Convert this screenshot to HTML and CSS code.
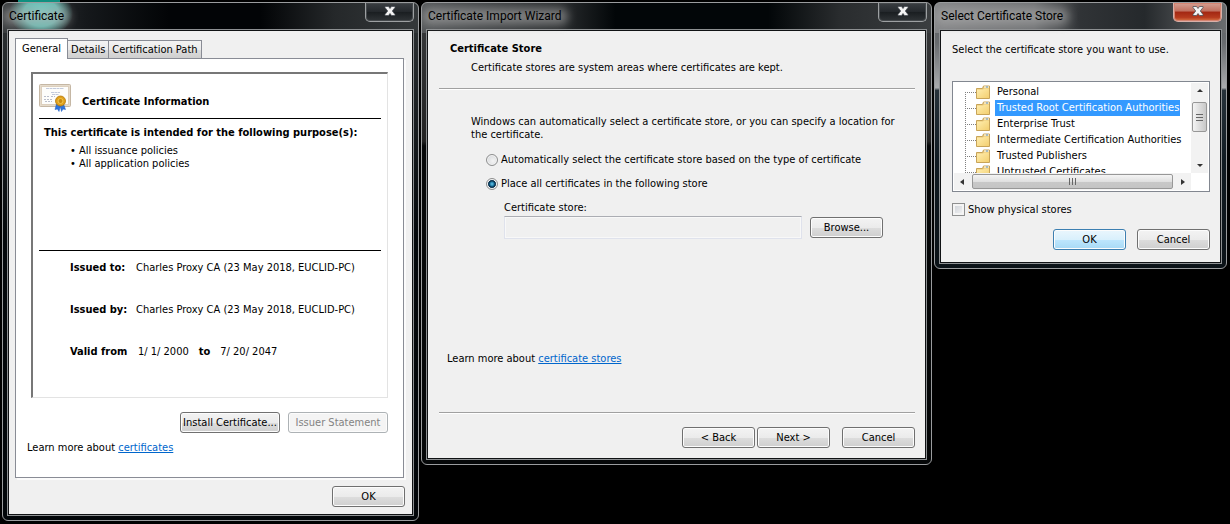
FILE: index.html
```html
<!DOCTYPE html>
<html lang="en">
<head>
<meta charset="utf-8">
<title>Certificate Import</title>
<link rel="stylesheet" href="styles.css">
</head>
<body>
<svg width="0" height="0" class="defs" aria-hidden="true">
  <defs>
    <linearGradient id="fold" x1="0" y1="0" x2="1" y2="1"><stop offset="0" stop-color="#ffeeb0"/><stop offset="1" stop-color="#f3cf70"/></linearGradient>
    <symbol id="close" viewBox="0 0 12 10">
      <path d="M1 .5h3.500L6 2.500 7.500.5H11v1L8.300 5 11 8.500v1H7.500L6 7.500 4.500 9.500H1v-1L3.700 5 1 1.500z" fill="#f4f4f4" stroke="#4b5058" stroke-width=".8"/>
    </symbol>
    <symbol id="folder" viewBox="0 0 15 14">
      <path d="M.5 3.500h6l1-2.500h6v12.500H.5z" fill="#e9c878" stroke="#c8a458"/>
      <path d="M8 2h5" stroke="#fff"/><path d="M10 2h2" stroke="#5b95c8"/>
      <path d="M1 4.500h6l1.500-1H13V13H1z" fill="url(#fold)"/>
    </symbol>
  </defs>
</svg>
<main class="desktop">

  <section class="window window-cert">
    <header class="titlebar"><h1 class="title">Certificate</h1><button class="close" aria-label="Close"><svg width="12" height="10"><use href="#close"/></svg></button></header>
    <div class="client client-cert">
      <div class="tabs" role="tablist">
        <button class="tab tab-active" role="tab" aria-selected="true">General</button>
        <button class="tab" role="tab">Details</button>
        <button class="tab" role="tab">Certification Path</button>
      </div>
      <div class="panel">
        <div class="sheet">
          <div class="sheet-head">
            <svg width="32" height="28" viewBox="0 0 32 28" aria-hidden="true">
              <rect x=".5" y=".5" width="31" height="22" rx="1" fill="#dccfbd" stroke="#c5b7a4"/>
              <rect x="1.500" y="1.500" width="29" height="20" fill="none" stroke="#efe6da" stroke-dasharray="1 1"/>
              <rect x="3" y="3" width="26" height="17" fill="#fdfdfb"/>
              <path d="M7 4.500h18M12 8.500h9M13 10.500h7" stroke="#c3cadb" stroke-dasharray="3 .5"/>
              <path d="M5 12.500h5M12 12.500h4M5 15.500h8M6 17.500h7" stroke="#b9bdca" stroke-dasharray="2 1"/>
              <path d="M17.500 20l-1.500 5.500 2.500-.5 1.500 2.500 1.500-6zM24.500 20l2 5.500-2.500-.5-1.500 2.500-1.500-6z" fill="#2e73dd" stroke="#1b58bd" stroke-width=".5"/>
              <circle cx="21.500" cy="17" r="5" fill="#e0a01c" stroke="#b57908" stroke-width=".8"/>
              <circle cx="21.500" cy="17" r="2.500" fill="#c98b10" stroke="#f3c64c"/>
            </svg>
            <h2 class="sheet-title">Certificate Information</h2>
          </div>
          <div class="purposes">
            <h3 class="bold">This certificate is intended for the following purpose(s):</h3>
            <ul class="bullets"><li>• All issuance policies</li><li>• All application policies</li></ul>
          </div>
          <dl class="facts">
            <div class="fact"><dt>Issued to:</dt><dd>Charles Proxy CA (23 May 2018, EUCLID-PC)</dd></div>
            <div class="fact"><dt>Issued by:</dt><dd>Charles Proxy CA (23 May 2018, EUCLID-PC)</dd></div>
            <div class="fact fact-valid"><dt>Valid from</dt><dd>1/ 1/ 2000</dd><dt>to</dt><dd>7/ 20/ 2047</dd></div>
          </dl>
        </div>
        <div class="sheet-actions">
          <button class="btn btn-wide">Install Certificate...</button>
          <button class="btn btn-wide" disabled>Issuer Statement</button>
        </div>
        <p class="learn">Learn more about <a href="#certificates">certificates</a></p>
      </div>
      <div class="cert-footer"><button class="btn">OK</button></div>
    </div>
  </section>

  <section class="window window-wizard">
    <header class="titlebar"><h1 class="title">Certificate Import Wizard</h1><button class="close" aria-label="Close"><svg width="12" height="10"><use href="#close"/></svg></button></header>
    <div class="client client-wizard">
      <div class="wizard-head">
        <h2 class="bold">Certificate Store</h2>
        <p class="subtitle">Certificate stores are system areas where certificates are kept.</p>
      </div>
      <div class="wizard-body">
        <p>Windows can automatically select a certificate store, or you can specify a location for the certificate.</p>
        <div class="options">
          <label class="option"><input type="radio" class="radio" name="store">Automatically select the certificate store based on the type of certificate</label>
          <label class="option"><input type="radio" class="radio" name="store" checked>Place all certificates in the following store</label>
        </div>
        <div class="store">
          <label for="store-name">Certificate store:</label>
          <div class="store-row"><input class="field" id="store-name" type="text" readonly><button class="btn">Browse...</button></div>
        </div>
      </div>
      <p class="wizard-learn">Learn more about <a href="#stores">certificate stores</a></p>
      <div class="wizard-footer"><button class="btn">&lt; Back</button><button class="btn">Next &gt;</button><button class="btn btn-apart">Cancel</button></div>
    </div>
  </section>

  <section class="window window-select">
    <header class="titlebar"><h1 class="title">Select Certificate Store</h1><button class="close close-red" aria-label="Close"><svg width="12" height="10"><use href="#close"/></svg></button></header>
    <div class="client client-select">
      <p>Select the certificate store you want to use.</p>
      <div class="tree">
        <ul class="nodes">
          <li class="node"><svg width="15" height="14"><use href="#folder"/></svg><span class="name">Personal</span></li>
          <li class="node"><svg width="15" height="14"><use href="#folder"/></svg><span class="name name-selected">Trusted Root Certification Authorities</span></li>
          <li class="node"><svg width="15" height="14"><use href="#folder"/></svg><span class="name">Enterprise Trust</span></li>
          <li class="node"><svg width="15" height="14"><use href="#folder"/></svg><span class="name">Intermediate Certification Authorities</span></li>
          <li class="node"><svg width="15" height="14"><use href="#folder"/></svg><span class="name">Trusted Publishers</span></li>
          <li class="node"><svg width="15" height="14"><use href="#folder"/></svg><span class="name">Untrusted Certificates</span></li>
        </ul>
        <div class="vbar"><i class="arrow arrow-up"></i><i class="thumb thumb-v"></i><i class="arrow arrow-down"></i></div>
        <div class="hbar"><i class="arrow arrow-left"></i><i class="thumb thumb-h"></i><i class="arrow arrow-right"></i></div>
      </div>
      <label class="check-row"><input type="checkbox" class="check">Show physical stores</label>
      <div class="select-footer"><button class="btn btn-default">OK</button><button class="btn">Cancel</button></div>
    </div>
  </section>
</main>
</body>
</html>
```
FILE: styles.css
```css
* { box-sizing: border-box; }
html, body { margin: 0; min-height: 100%; background: #000; }
body { font: 11px/13px "DejaVu Sans Condensed", "Noto Sans", sans-serif; color: #000; }
h1, h2, h3, p, ul, dl, dd { margin: 0; padding: 0; }
ul { list-style: none; }
svg { display: block; flex: none; }
button, input { font: inherit; color: inherit; margin: 0; }
a { color: #0066cc; }
.defs { position: absolute; }
.bold { font-size: 11px; line-height: 13px; font-weight: bold; }

.desktop {
  display: grid;
  grid-template-columns: 417fr 511fr 293fr;
  gap: 2px;
  align-items: start;
  padding: 2px 3px 2px 2px;
  background: linear-gradient(#109080, #109080) 18px 0 / 42px 2px no-repeat;
}

/* Window frame */
.window { min-width: 0; padding: 0 4px 4px; border: 1px solid #9a9c9e; border-radius: 6px; overflow: hidden; }
.window-cert { background: radial-gradient(ellipse 32px 24px at 38px 10px, #6fd6cb 0, #6bbdb4 55%, transparent) 0 0 / 100% 30px no-repeat, linear-gradient(90deg, #3b3e40 0, #15181b 20%, #020406 40%, #020406 62%, #25282a 80%, #34383a 100%) 0 0 / 100% 30px no-repeat, linear-gradient(#303436, #04080b 45%, #020609); }
.window-wizard { background: linear-gradient(90deg, #55585a 0, #26292b 28%, #020608 38%, #020608 68%, #292c2e 82%, #3b3e40 100%) 0 0 / 100% 30px no-repeat, linear-gradient(#3a3c3e, #222 30%, #050708 31%); }
.window-select { background: linear-gradient(90deg, #858688 0, #707274 34%, #303336 50%, #25292c 72%, #6b6d6f 100%) 0 0 / 100% 30px no-repeat, linear-gradient(#5b5e61 0, #686b6e 15%, #a9abad 32%, #27323a 33%, #101a21 60%, #0b1217); }
.titlebar { display: flex; justify-content: space-between; align-items: flex-start; height: 26px; padding: 0 0 0 2px; }
.title { position: relative; z-index: 0; font: 12px/26px Roboto, "Noto Sans", sans-serif; white-space: nowrap; }
.title::before { content: ""; position: absolute; z-index: -1; inset: 5px -6px 4px; border-radius: 8px; background: #aaa; opacity: .6; filter: blur(5px); }
.close { display: grid; place-items: center; width: 49px; height: 19px; padding: 0 0 2px; border: 1px solid #9da0a2; border-top: 0; border-radius: 0 0 5px 5px; background: linear-gradient(#3a3e42, #24282c 50%, #1a1e21 51%, #303437); box-shadow: inset 0 0 0 1px #45494c; }
.close-red { border-color: #d9b0a8; background: linear-gradient(#d5a093, #c0705f 45%, #a32712 50%, #b63b1e 80%, #d77545); box-shadow: inset 0 0 0 1px #d58471; }
.client { background: #f0f0f0; border: 1px solid #101214; outline: 1px solid #8d9092; margin: 1px; }

/* Buttons */
.btn { flex: none; width: 73px; height: 21px; padding: 0; text-align: center; white-space: nowrap; border: 1px solid #707070; border-radius: 3px; background: linear-gradient(#f3f3f3, #ebebeb 50%, #dddddd 51%, #cfcfcf); box-shadow: inset 0 0 0 1px #fcfcfc; }
.btn-wide { width: 100px; }
.btn:disabled { color: #838383; border-color: #adb2b5; background: #f4f4f4; }
.btn-default { border-color: #3c7fb1; background: linear-gradient(#eaf6fd, #d9f0fc 50%, #bee6fd 51%, #a7d9f5); }

/* Certificate */
.client-cert { padding: 7px 7px 7px 6px; }
.tabs { display: flex; align-items: flex-end; position: relative; }
.tab { height: 18px; padding: 0 3px; white-space: nowrap; border: 1px solid #898c95; border-bottom: 0; background: linear-gradient(#f3f3f3, #ebebeb 50%, #dddddd 51%, #cfcfcf); margin-left: -1px; }
.tab-active { height: 21px; padding: 0 6px 1px; margin: 0 0 -1px; background: #fff; z-index: 1; }
.panel { margin-right: 1px; padding: 13px 15px 23px 11px; border: 1px solid #898c95; background: #fff; box-shadow: 2px 2px #fbfbfb; }
.sheet { margin-left: 4px; padding: 10px 6px 0; border: 1px solid #e3e3e3; border-top: 2px solid #777; border-left: 2px solid #777; min-height: 326px; }
.sheet-head { display: flex; align-items: center; gap: 11px; padding-bottom: 6px; border-bottom: 1px solid #000; }
.sheet-title { font-size: 11px; line-height: 13px; padding-top: 7px; }
.purposes { min-height: 132px; padding: 7px 5px; border-bottom: 1px solid #000; }
.bullets { padding: 5px 26px; }
.facts { padding: 10px 31px; display: grid; gap: 29px; }
.fact { display: flex; gap: 8px; white-space: nowrap; }
.fact dt { font-weight: bold; min-width: 58px; }
.fact-valid { gap: 10px; }
.fact-valid dd + dt { min-width: 0; }
.sheet-actions { display: flex; justify-content: flex-end; gap: 8px; margin-top: 14px; }
.learn { margin-top: 8px; }
.cert-footer { display: flex; justify-content: flex-end; margin-top: 8px; }

/* Wizard */
.client-wizard { padding: 11px 10px 10px 11px; }
.wizard-head { padding: 0 11px 14px; border-bottom: 1px solid #a0a0a0; box-shadow: 0 1px #fff; }
.subtitle { padding: 6px 0 0 21px; }
.wizard-body { padding: 26px 32px 0; }
.wizard-body > p { margin-right: -16px; }
.options { display: grid; gap: 11px; padding: 12px 15px 11px; }
.option { display: flex; align-items: center; gap: 3px; white-space: nowrap; }
.radio { appearance: none; flex: none; width: 12px; height: 12px; border: 1px solid #8e8f8f; border-radius: 50%; background: radial-gradient(circle at 60% 60%, #f4f4f4, #cfd2d5); box-shadow: inset 0 0 0 1px #f4f4f4; }
.radio:checked { background: radial-gradient(circle, #6fc8ea 0, #1d7ca8 2px, #0b3350 3px, #0b3350 4px, #e4e8eb 4px); }
.store { padding: 0 0 0 33px; }
.store-row { display: flex; align-items: center; gap: 8px; margin-top: 2px; }
.field { flex: 1; min-width: 0; height: 23px; border: 1px solid #dfe2ec; border-top-color: #abadb3; background: #f0f0f0; box-shadow: inset 0 0 0 1px #f8f8f8; }
.wizard-learn { margin: 113px 8px 47px; }
.wizard-footer { display: flex; justify-content: flex-end; gap: 2px; padding-top: 14px; border-top: 1px solid #a0a0a0; box-shadow: inset 0 1px #fff; }
.btn-apart { margin-left: 10px; }

/* Store picker */
.client-select { padding: 12px 10px 12px 11px; }
.tree { display: grid; grid-template-columns: 1fr 17px; grid-template-rows: 90px 17px; margin-top: 25px; padding: 1px; border: 1px solid #828790; background: #fff; }
.nodes { overflow: hidden; margin-left: 11px; padding-top: 1px; }
.node { display: flex; align-items: center; height: 16px; padding-left: 1px; background: repeating-linear-gradient(#808080 0 1px, transparent 1px 2px) left bottom / 1px 100% no-repeat; white-space: nowrap; }
.node:first-child { background-size: 1px 8px; }
.node::before { content: ""; width: 10px; height: 1px; background: repeating-linear-gradient(90deg, transparent 0 1px, #808080 1px 2px); }
.name { margin-left: 4px; padding: 0 1px 0 2px; line-height: 16px; }
.name-selected { background: #3399ff; color: #fff; }
.vbar, .hbar { display: flex; align-items: center; justify-content: space-between; background: #f2f2f2; }
.vbar { flex-direction: column; padding: 6px 1px; }
.hbar { padding: 0 6px; }
.arrow { border: 3px solid transparent; }
.arrow-up { border-top: 0; border-bottom-color: #333; }
.arrow-down { border-bottom: 0; border-top-color: #333; }
.arrow-left { border-left: 0; border-right: 4px solid #333; }
.arrow-right { border-right: 0; border-left: 4px solid #333; }
.thumb { display: block; border: 1px solid #979797; border-radius: 2px; }
.thumb-v { width: 15px; height: 30px; margin-bottom: 22px; background: repeating-linear-gradient(#666 0 1px, transparent 1px 3px) center / 7px 7px no-repeat, linear-gradient(90deg, #f4f4f4, #ddd 50%, #c8c8c8); }
.thumb-h { flex: 1; height: 15px; margin: 0 8px; background: repeating-linear-gradient(90deg, #666 0 1px, transparent 1px 3px) center / 7px 7px no-repeat, linear-gradient(#f4f4f4, #e0e0e0 50%, #c8c8c8 51%, #c4c4c4); }
.check-row { display: flex; align-items: center; gap: 3px; margin-top: 11px; }
.check { appearance: none; width: 13px; height: 13px; border: 1px solid #8e8f8f; background: linear-gradient(135deg, #cbcfd5, #f6f6f6); box-shadow: inset 0 0 0 2px #f4f4f4; }
.select-footer { display: flex; justify-content: flex-end; gap: 11px; margin-top: 13px; }
```
